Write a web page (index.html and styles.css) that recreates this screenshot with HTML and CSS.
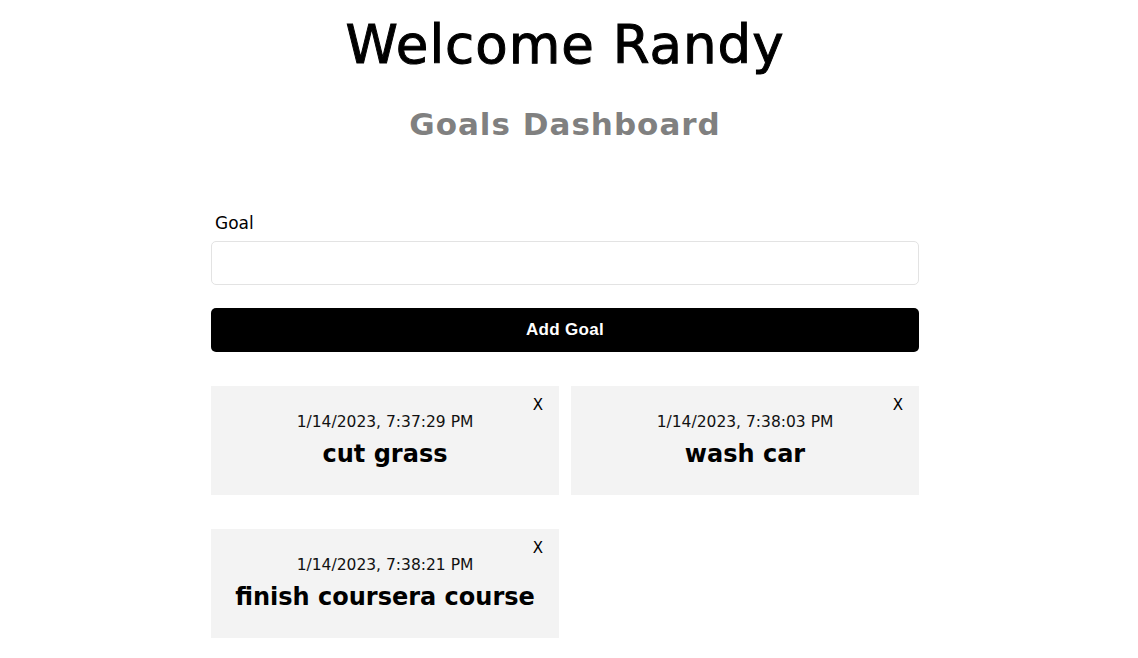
FILE: index.html
```html
<!DOCTYPE html>
<html>
<head>
<meta charset="utf-8">
<link rel="stylesheet" href="styles.css">
</head>
<body>
<main class="page">
  <header class="head">
    <h1 class="welcome">Welcome Randy</h1>
    <h2 class="sub">Goals Dashboard</h2>
  </header>
  <section class="form">
    <label class="label" for="goal">Goal</label>
    <input class="input" id="goal" type="text">
    <button class="btn">Add Goal</button>
  </section>
  <section class="goals">
    <div class="goal">
      <div class="date">1/14/2023, 7:37:29 PM</div>
      <h3 class="text">cut grass</h3>
      <button class="close">X</button>
    </div>
    <div class="goal">
      <div class="date">1/14/2023, 7:38:03 PM</div>
      <h3 class="text">wash car</h3>
      <button class="close">X</button>
    </div>
    <div class="goal">
      <div class="date">1/14/2023, 7:38:21 PM</div>
      <h3 class="text">finish coursera course</h3>
      <button class="close">X</button>
    </div>
  </section>
</main>
</body>
</html>
```
FILE: styles.css
```css
* { box-sizing: border-box; }
html, body { margin: 0; padding: 0; background: #fff; }
body {
  font-family: "DejaVu Sans", sans-serif;
  color: #000;
  padding-right: 8px;
}
.page {
  width: 708px;
  margin: 0 auto;
  display: flex;
  flex-direction: column;
}
.head { text-align: center; padding-top: 13px; }
.welcome {
  margin: 0;
  font-size: 53px;
  font-weight: 400;
  line-height: 64px;
  letter-spacing: 1px;
  -webkit-text-stroke: 1px #000;
}
.sub {
  margin: 0;
  margin-top: 27px;
  font-size: 31px;
  font-weight: 700;
  color: #808080;
  line-height: 40px;
  letter-spacing: 1px;
}
.form {
  display: flex;
  flex-direction: column;
  margin-top: 69px;
}
.label {
  font-size: 17px;
  line-height: 20px;
  padding-left: 4px;
  margin-bottom: 8px;
}
.input {
  height: 44px;
  border: 1px solid #e3e3e3;
  border-radius: 5px;
  font-size: 16px;
  padding: 0 10px;
}
.btn {
  margin-top: 23px;
  height: 44px;
  border: none;
  border-radius: 5px;
  background: #000;
  color: #fff;
  font-family: "Liberation Sans", Arial, sans-serif;
  font-weight: 700;
  font-size: 17px;
  letter-spacing: 0.3px;
}
.goals {
  margin-top: 34px;
  display: grid;
  grid-template-columns: 1fr 1fr;
  column-gap: 12px;
  row-gap: 34px;
}
.goal {
  position: relative;
  background: #f3f3f3;
  height: 109px;
  display: flex;
  flex-direction: column;
  align-items: center;
  padding-top: 25px;
}
.date {
  font-size: 15.5px;
  line-height: 22px;
  color: #111;
}
.text {
  margin: 0;
  margin-top: 5px;
  font-size: 24px;
  font-weight: 700;
  line-height: 32px;
}
.close {
  position: absolute;
  top: 8px;
  right: 12px;
  background: none;
  border: none;
  font-family: "DejaVu Sans", sans-serif;
  font-size: 15px;
  padding: 2px 4px;
  color: #000;
}
```
